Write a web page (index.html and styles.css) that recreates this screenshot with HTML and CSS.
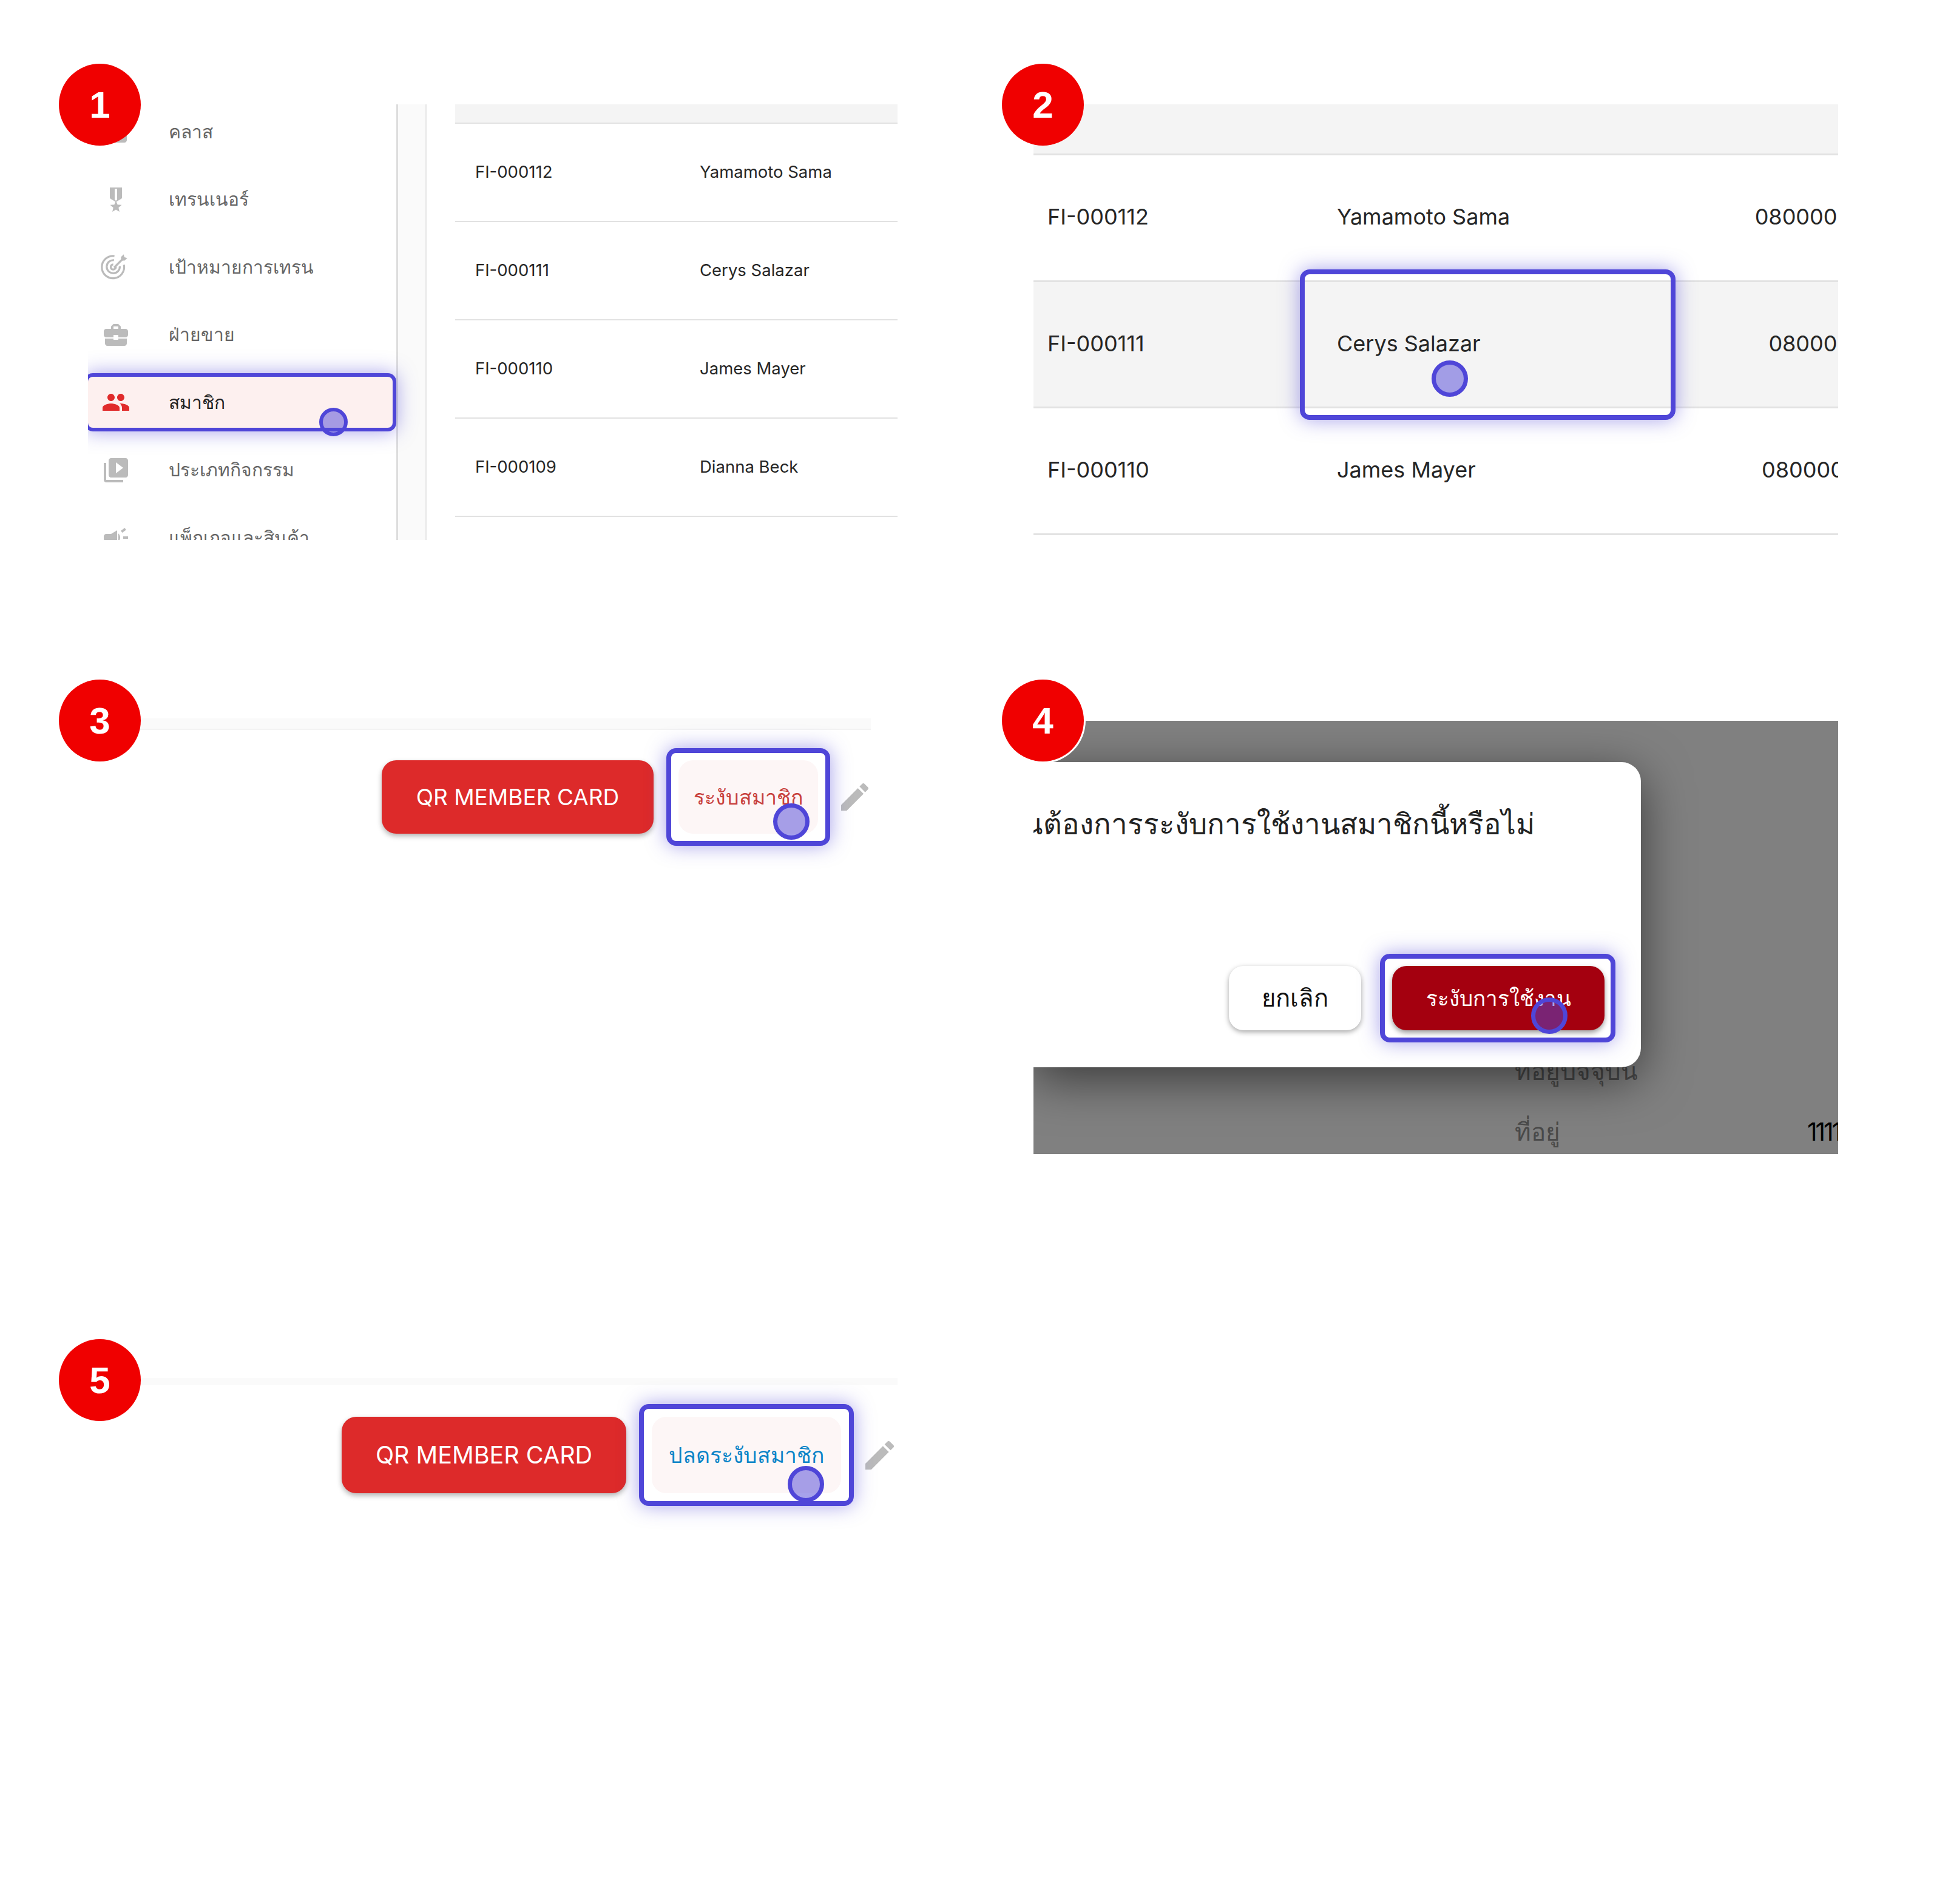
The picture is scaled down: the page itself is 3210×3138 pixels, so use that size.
FILE: index.html
```html
<!DOCTYPE html>
<html lang="th">
<head>
  <meta charset="UTF-8">
  <meta name="viewport" content="width=device-width, initial-scale=1.0">
  <title>ระงับสมาชิก</title>
  <link rel="stylesheet" href="styles.css">
</head>
<body>
  <div class="page">

    <!-- 1: เมนูสมาชิก -->
    <section class="panel panel-menu">
      <div class="badge">1</div>
      <div class="clip menu-clip">
        <nav class="sidebar">
          <div class="nav-item">
            <svg class="nav-icon" viewBox="0 0 24 24"><path d="M19 3H5c-1.1 0-2 .9-2 2v14c0 1.1.9 2 2 2h14c1.1 0 2-.9 2-2V5c0-1.1-.9-2-2-2z"/></svg>
            <span>คลาส</span>
          </div>
          <div class="nav-item">
            <svg class="nav-icon" viewBox="0 0 24 24"><path d="M17 10.43V2H7v8.43c0 .35.18.68.49.86l4.18 2.51-.99 2.34-3.41.29 2.59 2.24L9.07 22 12 20.23 14.93 22l-.78-3.33 2.59-2.24-3.41-.29-.99-2.34 4.18-2.51c.3-.18.48-.5.48-.86zm-4 1.8l-1 .6-1-.6V3h2v9.23z"/></svg>
            <span>เทรนเนอร์</span>
          </div>
          <div class="nav-item">
            <svg class="nav-icon nav-icon-line" viewBox="0 0 24 24"><path d="M19.6 10.2A9.2 9.2 0 1 1 11.8 3"/><path d="M16.2 11.4a5.4 5.4 0 1 1-4.8-5"/><path d="M12.9 11.7a2.1 2.1 0 1 1-2.1-1.8"/><path d="M11.5 12.5L19 5"/><path class="fill-tip" d="M17.2 3.8L19.4 1.6l.6 2.4 2.4.6-2.2 2.2h-3z"/></svg>
            <span>เป้าหมายการเทรน</span>
          </div>
          <div class="nav-item">
            <svg class="nav-icon" viewBox="0 0 24 24"><path d="M10 16v-1H3.01L3 19c0 1.11.89 2 2 2h14c1.11 0 2-.89 2-2v-4h-7v1h-4zm10-9h-4.01V5l-2-2h-4l-2 2v2H4c-1.1 0-2 .9-2 2v3c0 1.1.9 2 2 2h6v-2h4v2h6c1.1 0 2-.9 2-2V9c0-1.1-.9-2-2-2zm-6 0h-4V5h4v2z"/></svg>
            <span>ฝ่ายขาย</span>
          </div>
          <div class="nav-item active">
            <svg class="nav-icon" viewBox="0 0 24 24"><path d="M16 11c1.66 0 2.99-1.34 2.99-3S17.66 5 16 5c-1.66 0-3 1.34-3 3s1.34 3 3 3zm-8 0c1.66 0 2.99-1.34 2.99-3S9.66 5 8 5C6.34 5 5 6.34 5 8s1.34 3 3 3zm0 2c-2.33 0-7 1.17-7 3.5V19h14v-2.5c0-2.33-4.67-3.5-7-3.5zm8 0c-.29 0-.62.02-.97.05 1.16.84 1.97 1.97 1.97 3.45V19h6v-2.5c0-2.33-4.67-3.5-7-3.5z"/></svg>
            <span>สมาชิก</span>
            <div class="cursor cursor-small cursor-menu"></div>
          </div>
          <div class="nav-item">
            <svg class="nav-icon" viewBox="0 0 24 24"><path d="M4 6H2v14c0 1.1.9 2 2 2h14v-2H4V6zm16-4H8c-1.1 0-2 .9-2 2v12c0 1.1.9 2 2 2h12c1.1 0 2-.9 2-2V4c0-1.1-.9-2-2-2zm-8 12.5v-9l6 4.5-6 4.5z"/></svg>
            <span>ประเภทกิจกรรม</span>
          </div>
          <div class="nav-item">
            <svg class="nav-icon" viewBox="0 0 24 24"><path d="M18 11v2h4v-2h-4zm-2 6.61c.96.71 2.21 1.65 3.2 2.39.4-.53.8-1.07 1.2-1.6-.99-.74-2.24-1.68-3.2-2.4-.4.54-.8 1.08-1.2 1.61zM20.4 5.6c-.4-.53-.8-1.07-1.2-1.6-.99.74-2.24 1.68-3.2 2.4.4.53.8 1.07 1.2 1.6.96-.72 2.21-1.65 3.2-2.4zM4 9c-1.1 0-2 .9-2 2v2c0 1.1.9 2 2 2h1v4h2v-4h1l5 3V6L8 9H4zm11.5 3c0-1.33-.58-2.53-1.5-3.35v6.69c.92-.81 1.5-2.01 1.5-3.34z"/></svg>
            <span>แพ็กเกจและสินค้า</span>
          </div>
        </nav>
        <div class="sidebar-edge"></div>
        <div class="member-table">
          <div class="table-head"></div>
          <div class="table-row"><span>FI-000112</span><span>Yamamoto Sama</span></div>
          <div class="table-row"><span>FI-000111</span><span>Cerys Salazar</span></div>
          <div class="table-row"><span>FI-000110</span><span>James Mayer</span></div>
          <div class="table-row"><span>FI-000109</span><span>Dianna Beck</span></div>
        </div>
      </div>
    </section>

    <!-- 2: เลือกรายชื่อ -->
    <section class="panel panel-list">
      <div class="badge">2</div>
      <div class="clip list-clip">
        <div class="list-head"></div>
        <div class="list-row"><span>FI-000112</span><span>Yamamoto Sama</span><span class="col-phone">0800000000</span></div>
        <div class="list-row selected"><span>FI-000111</span><span>Cerys Salazar</span><span class="col-phone">08000000</span></div>
        <div class="list-row"><span>FI-000110</span><span>James Mayer</span><span class="col-phone">080000000</span></div>
        <div class="ring list-ring"><div class="cursor cursor-list"></div></div>
      </div>
    </section>

    <!-- 3: ปุ่มระงับสมาชิก -->
    <section class="panel panel-actions">
      <div class="badge badge-strip">3</div>
      <div class="strip strip-thick"></div>
      <div class="actions">
        <button class="btn-qr">QR MEMBER CARD</button>
        <div class="ring action-ring">
          <button class="btn-soft btn-suspend">ระงับสมาชิก</button>
          <div class="cursor cursor-suspend"></div>
        </div>
        <svg class="edit-icon" viewBox="3 3 18 18"><path d="M3 17.25V21h3.75L17.81 9.94l-3.75-3.75L3 17.25zM20.71 7.04c.39-.39.39-1.02 0-1.41l-2.34-2.34c-.39-.39-1.02-.39-1.41 0l-1.83 1.83 3.75 3.75 1.83-1.83z"/></svg>
      </div>
    </section>

    <!-- 4: ยืนยันการระงับ -->
    <section class="panel panel-dialog">
      <div class="badge badge-dialog">4</div>
      <div class="clip dialog-clip">
        <div class="modal">
          <p class="modal-title">คุณต้องการระงับการใช้งานสมาชิกนี้หรือไม่</p>
          <div class="modal-actions">
            <button class="btn-cancel">ยกเลิก</button>
            <div class="ring confirm-ring">
              <button class="btn-confirm">ระงับการใช้งาน</button>
              <div class="cursor cursor-confirm"></div>
            </div>
          </div>
        </div>
        <div class="behind">
          <div class="behind-row"><span class="behind-label">ที่อยู่ปัจจุบัน</span></div>
          <div class="behind-row"><span class="behind-label">ที่อยู่</span><span class="behind-value">1111111</span></div>
        </div>
      </div>
    </section>

    <!-- 5: ปุ่มปลดระงับ -->
    <section class="panel panel-actions panel-unsuspend">
      <div class="badge badge-strip">5</div>
      <div class="strip"></div>
      <div class="actions">
        <button class="btn-qr">QR MEMBER CARD</button>
        <div class="ring action-ring">
          <button class="btn-soft btn-unsuspend">ปลดระงับสมาชิก</button>
          <div class="cursor cursor-unsuspend"></div>
        </div>
        <svg class="edit-icon" viewBox="3 3 18 18"><path d="M3 17.25V21h3.75L17.81 9.94l-3.75-3.75L3 17.25zM20.71 7.04c.39-.39.39-1.02 0-1.41l-2.34-2.34c-.39-.39-1.02-.39-1.41 0l-1.83 1.83 3.75 3.75 1.83-1.83z"/></svg>
      </div>
    </section>

  </div>
</body>
</html>
```

FILE: styles.css
```css
* {
  box-sizing: border-box;
}

body {
  margin: 0;
  background: #fff;
  font-family: "Inter", "Noto Sans", sans-serif;
  color: #262626;
}

button {
  font-family: inherit;
  border: none;
  padding: 0;
}

.page {
  display: grid;
  grid-template-columns: 1334px 1326px;
  grid-template-rows: 1012px 1087px;
  column-gap: 224px;
  height: 3138px;
  padding: 172px 0 0 145px;
}

.panel {
  position: relative;
  align-self: start;
}

.clip {
  overflow: hidden;
}

/* numeros rojos */
.badge {
  position: absolute;
  left: -48px;
  top: -67px;
  z-index: 5;
  width: 135px;
  height: 135px;
  display: flex;
  align-items: center;
  justify-content: center;
  border-radius: 50%;
  background: #f00000;
  color: #fff;
  font-family: "Liberation Sans", sans-serif;
  font-size: 62px;
  font-weight: 700;
}

.panel-list .badge,
.badge-dialog {
  left: -52px;
}

.badge-dialog {
  top: -68px;
  box-shadow: 0 0 0 3px #fff;
}

.badge-strip {
  top: -64px;
}

/* anillo azul */
.ring {
  position: relative;
  border: 8px solid #4f46d8;
  border-radius: 16px;
  box-shadow: 0 0 32px rgba(79, 70, 216, 0.5);
}

.cursor {
  position: absolute;
  width: 60px;
  height: 60px;
  border: 7px solid #4f46d8;
  border-radius: 50%;
  background: rgba(79, 70, 216, 0.5);
}

.cursor-small {
  width: 47px;
  height: 47px;
  border-width: 6px;
}

/* panel 1 */
.menu-clip {
  display: flex;
  height: 718px;
}

.sidebar {
  flex: 0 0 508px;
  margin-top: -3px;
  display: flex;
  flex-direction: column;
  gap: 15.5px;
}

.nav-item {
  position: relative;
  flex: 0 0 96px;
  display: flex;
  align-items: center;
  padding-left: 133px;
  font-size: 30px;
  color: #666;
}

.nav-icon {
  position: absolute;
  left: 22px;
  top: 24px;
  width: 48px;
  height: 48px;
  fill: #bbb;
}

.nav-icon-line {
  left: 20px;
  fill: none;
  stroke: #bbb;
  stroke-width: 1.6;
}

.nav-icon-line .fill-tip {
  fill: #bbb;
  stroke: none;
}

.nav-item.active {
  z-index: 2;
  margin-left: -6px;
  border: 6px solid #4f46d8;
  border-radius: 14px;
  background: #fdf0ef;
  color: #222;
  box-shadow: 0 0 32px rgba(79, 70, 216, 0.5);
}

.active .nav-icon {
  top: 18px;
  fill: #e02b2b;
}

.cursor-menu {
  right: 74px;
  bottom: -14px;
}

.sidebar-edge {
  flex: 0 0 50px;
  background: #fafafa;
  border-left: 3px solid #ddd;
  border-right: 2px solid #e6e6e6;
}

.member-table {
  flex: 0 0 729px;
  margin-left: 47px;
}

.table-head {
  height: 32px;
  background: #f4f4f4;
  border-bottom: 2px solid #e2e2e2;
}

.table-row {
  display: grid;
  grid-template-columns: 370px 1fr;
  align-items: center;
  height: 162px;
  padding: 0 0 3px 33px;
  border-bottom: 2px solid #e2e2e2;
  font-size: 27.5px;
}

/* panel 2 */
.panel-list {
  width: 1326px;
}

.list-clip {
  position: relative;
  height: 730px;
}

.list-head {
  height: 84px;
  background: #f4f4f4;
  border-bottom: 3px solid #e2e2e2;
}

.list-row {
  display: grid;
  grid-template-columns: 477px 597px 410px;
  align-items: center;
  width: 1500px;
  height: 208.5px;
  padding: 0 0 3px 23px;
  border-bottom: 3px solid #e2e2e2;
  font-size: 36px;
}

.list-row.selected {
  background: #f4f4f4;
}

.col-phone {
  text-align: center;
}

.list-ring {
  position: absolute;
  left: 439px;
  top: 272px;
  width: 619px;
  height: 248px;
}

.cursor-list {
  left: 209px;
  top: 142px;
}

/* paneles 3 y 5 */
.panel-actions {
  width: 1290px;
}

.panel-unsuspend {
  width: 1334px;
}

.strip {
  height: 12px;
  background: #fafafa;
}

.strip-thick {
  height: 19px;
  border-bottom: 2px solid #f3f3f3;
}

.actions {
  display: flex;
  justify-content: flex-end;
  align-items: center;
  margin-top: 30px;
  padding-right: 4px;
}

.panel-unsuspend .actions {
  margin-top: 31px;
  padding-right: 6px;
}

.btn-qr {
  width: 448px;
  height: 121px;
  border-radius: 24px;
  background: #dd2a2a;
  color: #fff;
  font-size: 37px;
  box-shadow: 0 4px 8px rgba(0, 0, 0, 0.3);
}

.panel-unsuspend .btn-qr {
  width: 469px;
  height: 126px;
  font-size: 39.5px;
}

.action-ring {
  margin: 0 18px 0 21px;
  padding: 12px;
}

.panel-unsuspend .action-ring {
  margin: 0 19px 0 21px;
  padding: 13px;
}

.btn-soft {
  display: block;
  border-radius: 24px;
  background: #fdf6f6;
  font-size: 34px;
}

.btn-suspend {
  width: 230px;
  height: 121px;
  color: #c8403c;
}

.btn-unsuspend {
  width: 312px;
  height: 126px;
  color: #0a84c8;
  font-size: 35.5px;
}

.cursor-suspend {
  right: 26px;
  bottom: 2px;
}

.cursor-unsuspend {
  right: 41px;
  bottom: -2px;
}

.edit-icon {
  width: 45px;
  height: 45px;
  fill: #bbb;
}

.panel-unsuspend .edit-icon {
  width: 47px;
  height: 47px;
}

/* panel 4 */
.panel-dialog {
  margin-top: 4px;
}

.dialog-clip {
  position: relative;
  height: 714px;
  padding-top: 68px;
  background: #808080;
}

.modal {
  position: relative;
  z-index: 2;
  width: 1001px;
  height: 503px;
  display: flex;
  flex-direction: column;
  justify-content: space-between;
  padding: 64px 42px 41px 0;
  background: #fff;
  border-radius: 0 32px 32px 0;
  box-shadow: 0 20px 80px rgba(0, 0, 0, 0.55);
}

.modal-title {
  margin: 0 0 0 -60px;
  font-size: 47.5px;
  color: #222;
  white-space: nowrap;
}

.modal-actions {
  display: flex;
  justify-content: flex-end;
  align-items: center;
  gap: 31px;
}

.btn-cancel {
  width: 218px;
  height: 106px;
  border-radius: 24px;
  background: #fff;
  color: #111;
  font-size: 40px;
  box-shadow: 0 3px 8px rgba(0, 0, 0, 0.35);
}

.confirm-ring {
  padding: 12px 10px 12px 12px;
}

.btn-confirm {
  display: block;
  width: 350px;
  height: 106px;
  border-radius: 24px;
  background: #a4000f;
  color: #fff;
  font-size: 35px;
  box-shadow: 0 4px 8px rgba(0, 0, 0, 0.4);
}

.cursor-confirm {
  right: 71px;
  bottom: 6px;
}

.behind {
  margin-top: -44px;
  padding-left: 793px;
  font-size: 40.5px;
  color: #4a4a4a;
}

.behind-row {
  display: flex;
  height: 100px;
  align-items: center;
  white-space: nowrap;
}

.behind-label {
  flex: 0 0 482px;
}

.behind-value {
  color: #000;
  letter-spacing: -3px;
}
```
